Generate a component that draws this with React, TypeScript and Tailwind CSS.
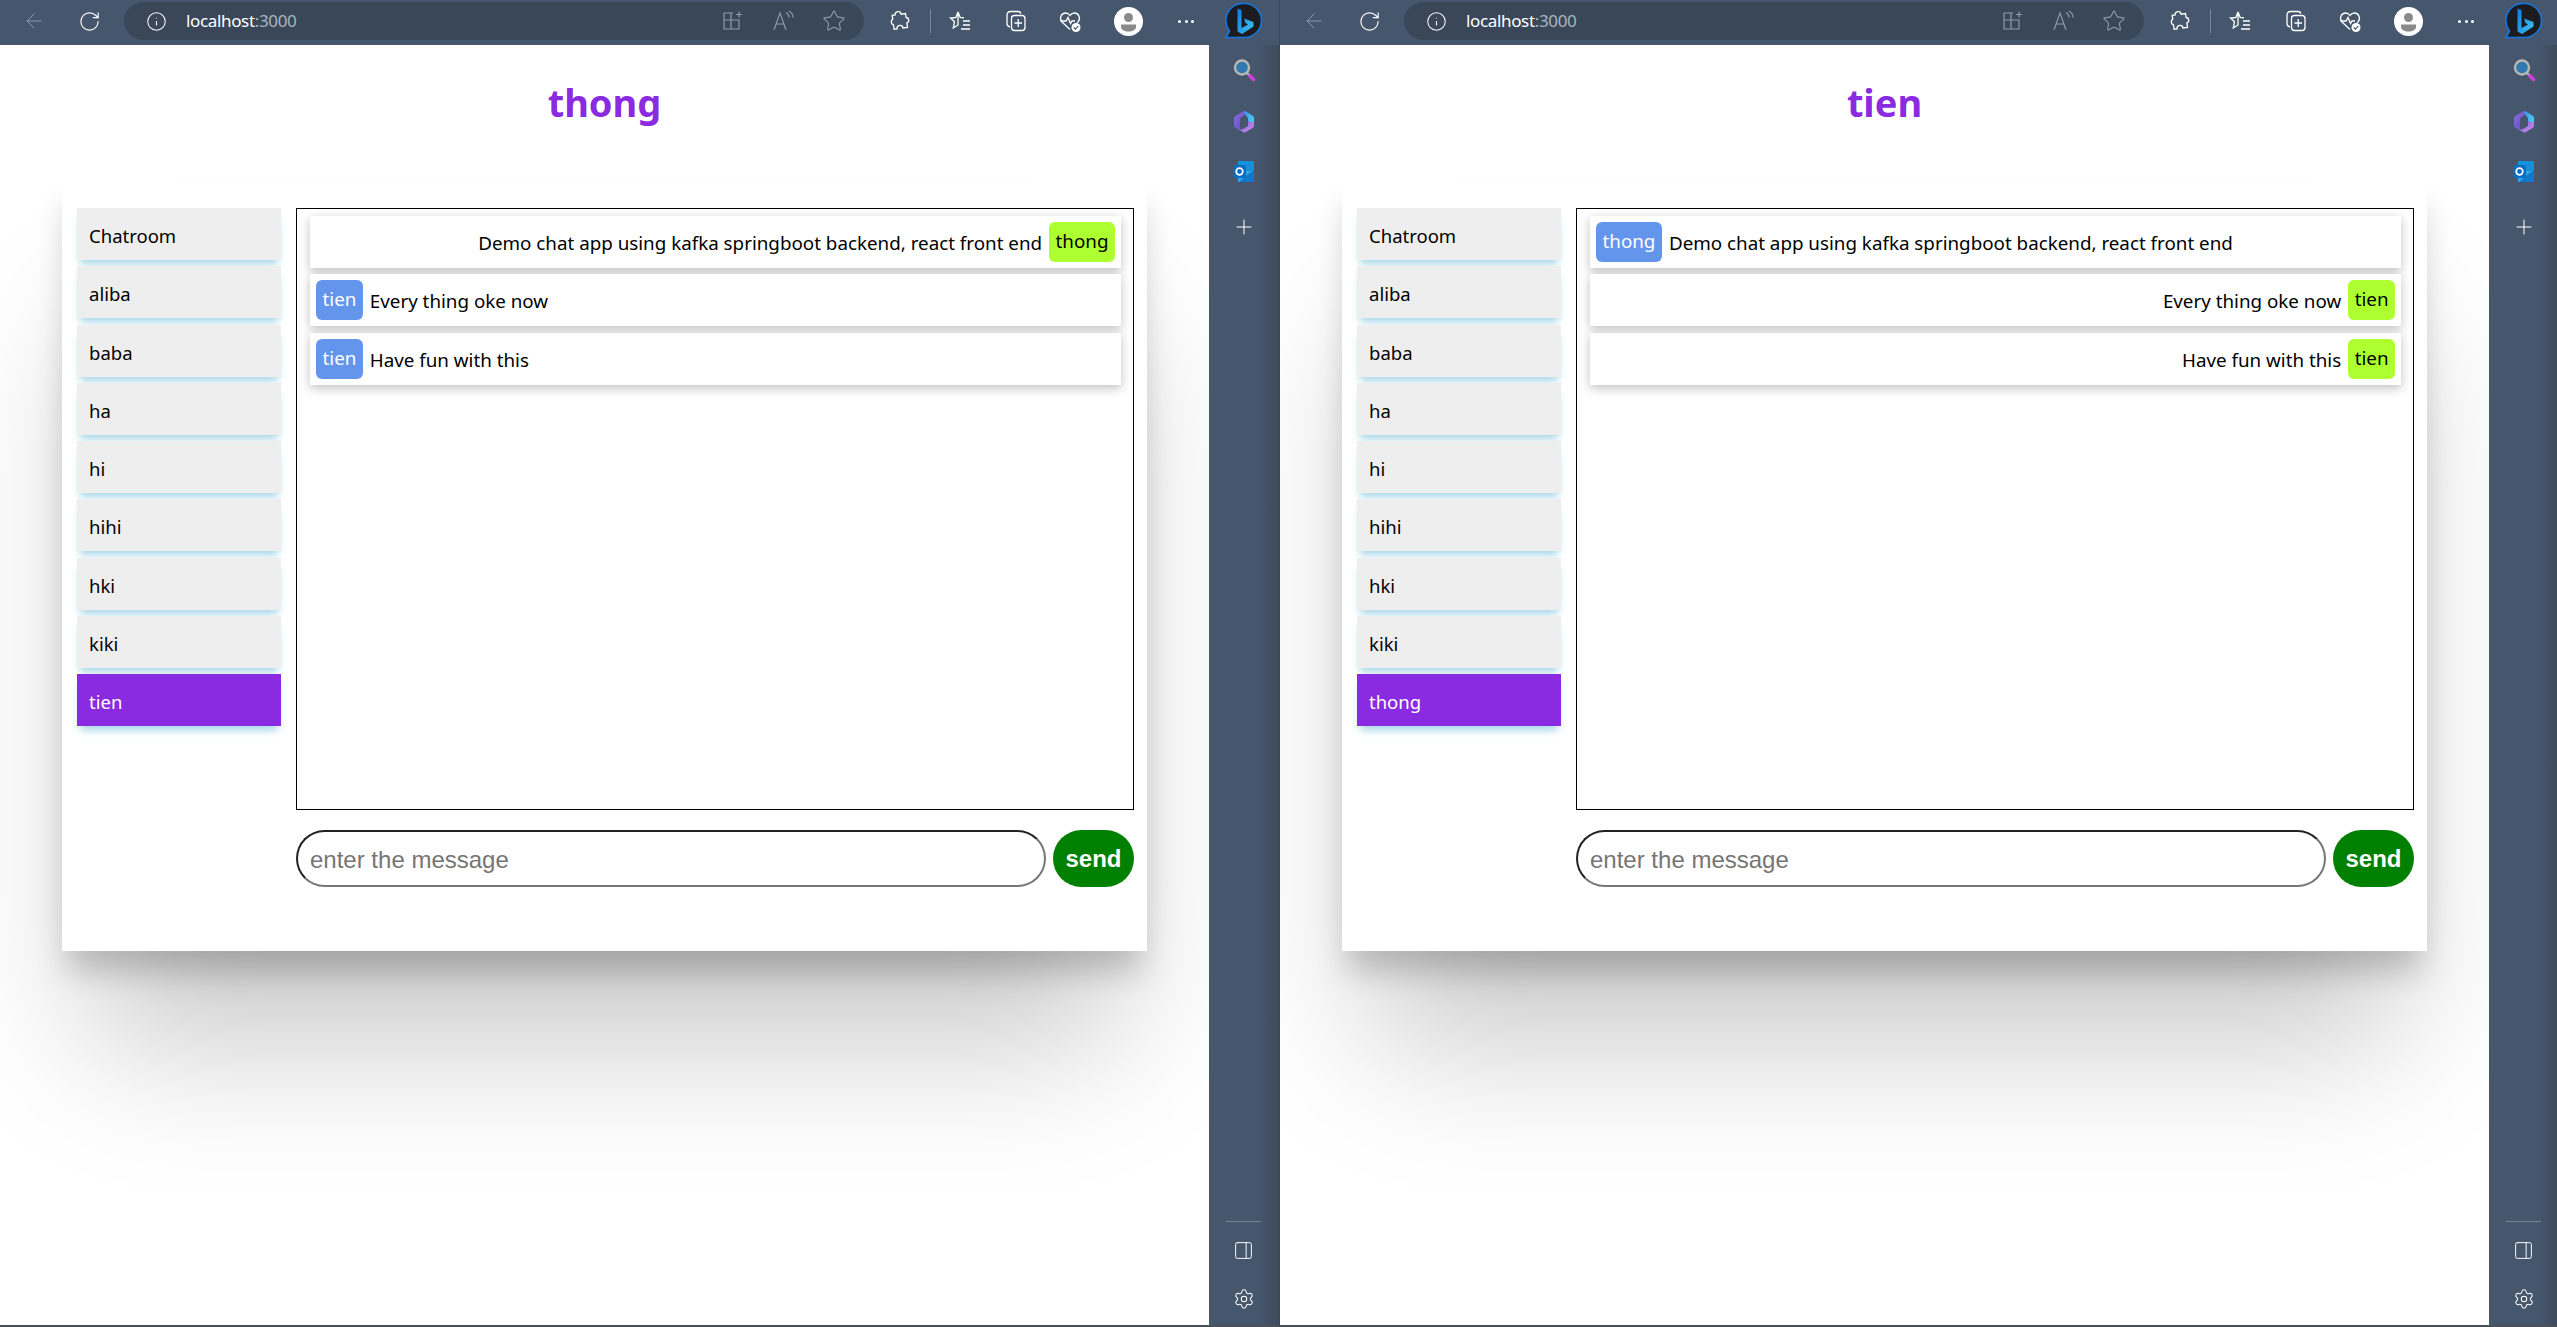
import React from 'react';
import { ArrowLeft, RotateCw, Info, Star, Plus, Settings, PanelRight } from 'lucide-react';

const rooms = {
  thong: ['Chatroom', 'aliba', 'baba', 'ha', 'hi', 'hihi', 'hki', 'kiki', 'tien'],
  tien: ['Chatroom', 'aliba', 'baba', 'ha', 'hi', 'hihi', 'hki', 'kiki', 'thong'],
};

const messages = [
  { from: 'thong', text: 'Demo chat app using kafka springboot backend, react front end' },
  { from: 'tien', text: 'Every thing oke now' },
  { from: 'tien', text: 'Have fun with this' },
];

const BingLogo = () => (
  <svg width="38" height="38" viewBox="0 0 38 38">
    <defs>
      <linearGradient id="bingGrad" x1="0" y1="0" x2="1" y2="1">
        <stop offset="0" stopColor="#1478e6" />
        <stop offset="1" stopColor="#3ec6ea" />
      </linearGradient>
    </defs>
    <path d="M19.500 1.500a17 17 0 0 1 0 34H1l3.500-6.500A17 17 0 0 1 19.500 1.500z" fill="#1c1c1e" stroke="#1477e0" strokeWidth="1.600" />
    <path d="M12.500 6.500L16.500 8v18l6.500-3.500-2.500-1.500-1.500-4.500 9.500 3.500v4.500L17 32l-4.500-2.500z" fill="url(#bingGrad)" />
  </svg>
);

const SplitIcon = () => (
  <svg width="24" height="24" viewBox="0 0 24 24" fill="none" stroke="#8d99aa" strokeWidth="1.200">
    <path d="M13 4H4v16h15v-9H4M11 4v16" />
    <path d="M19 2.500v6M16 5.500h6" />
  </svg>
);

const ReadAloudIcon = () => (
  <svg width="24" height="24" viewBox="0 0 24 24" fill="none" stroke="#8d99aa" strokeWidth="1.200">
    <path d="M3 21L9 4l6 17M5.200 15h7.600" />
    <path d="M15 3.500c2 1 3 2.500 3 5M18 2c2.600 1.400 4 3.600 4 6.500" />
  </svg>
);

const PuzzleIcon = () => (
  <svg width="24" height="24" viewBox="0 0 24 24" fill="none" stroke="#fff" strokeWidth="1.300">
    <path d="M9 5.500a3 3 0 0 1 6 0h4.500v4a2.800 2.800 0 0 1 0 5.500v4.500H15a3 3 0 0 0-6 0H6v-4.500a3 3 0 0 1 0-5.500V5.500z" transform="rotate(-8 12 12)" />
  </svg>
);

const FavoritesIcon = () => (
  <svg width="24" height="24" viewBox="0 0 24 24" fill="none" stroke="#fff" strokeWidth="1.300">
    <path d="M10 3l2.200 5.500 3.800.4M7.800 8.500L2.500 9l4 3.700L5.300 19l4.700-3L10 3z" />
    <path d="M15 12h7M15 16h7M13 20h9" />
  </svg>
);

const CollectionsIcon = () => (
  <svg width="24" height="24" viewBox="0 0 24 24" fill="none" stroke="#fff" strokeWidth="1.300">
    <path d="M6 18c-2-.5-3-1.500-3-3.500V6c0-2 1.500-3.500 3.500-3.500H14c1.500 0 2.500.5 3 2" />
    <rect x="7.500" y="6.500" width="13.500" height="15" rx="3" />
    <path d="M14.200 10v8M10.500 14h7.500" />
  </svg>
);

const HealthIcon = () => (
  <svg width="24" height="24" viewBox="0 0 24 24" fill="none">
    <path d="M12 20.500L4 13C1 9.500 3 4 7.500 4c2 0 3.500 1 4.500 2.500C13 5 14.500 4 16.500 4 21 4 23 9.500 20 13l-1 1" stroke="#fff" strokeWidth="1.300" />
    <path d="M2.500 12H8l2-3.500 2.500 6 1.500-2.500h3" stroke="#fff" strokeWidth="1.300" />
    <circle cx="18" cy="18.500" r="4.500" fill="#fff" />
    <path d="M15.800 18.500l1.600 1.600 2.800-3" stroke="#46566d" strokeWidth="1.300" />
  </svg>
);

const Avatar = () => (
  <svg width="29" height="29" viewBox="0 0 29 29">
    <circle cx="14.500" cy="14.500" r="14.500" fill="#fff" />
    <circle cx="14.500" cy="10.500" r="4.500" fill="#8a8a8a" />
    <path d="M7 17.500h15v2.500c0 2.500-3 4.500-7.500 4.500S7 22.500 7 20z" fill="#8a8a8a" />
  </svg>
);

const SearchApp = () => (
  <svg width="24" height="24" viewBox="0 0 24 24">
    <circle cx="10" cy="9.500" r="7" fill="#2f79ad" stroke="#b6b6b6" strokeWidth="2.400" />
    <path d="M15 15l3 3" stroke="#b6b6b6" strokeWidth="2.400" />
    <path d="M18 18l3.500 3.500" stroke="#d53fe0" strokeWidth="3.600" strokeLinecap="round" />
  </svg>
);

const CopilotApp = () => (
  <svg width="24" height="24" viewBox="0 0 24 24">
    <defs>
      <linearGradient id="copA" x1="0" y1="0" x2="1" y2="1">
        <stop offset="0" stopColor="#8a6fe6" />
        <stop offset="1" stopColor="#5b45bf" />
      </linearGradient>
      <linearGradient id="copB" x1="0" y1="0" x2="1" y2="1">
        <stop offset="0" stopColor="#3a8fe6" />
        <stop offset="1" stopColor="#55d2ea" />
      </linearGradient>
      <linearGradient id="copC" x1="0" y1="0" x2="1" y2="1">
        <stop offset="0" stopColor="#8a55d2" />
        <stop offset="1" stopColor="#c795ee" />
      </linearGradient>
    </defs>
    <path d="M11 1.500L3.500 6c-1 .6-1.500 1.500-1.500 2.500v7c0 1 .5 2 1.500 2.500L8 20.500V9.500c0-1 .5-1.800 1.500-2.300L14 4z" fill="url(#copA)" />
    <path d="M11 1.500c1-.5 2-.5 3 0l6.500 4c1 .6 1.500 1.500 1.500 2.500v6.500l-6-3.500V8.500c0-1-.5-1.500-1.300-2z" fill="url(#copB)" />
    <path d="M22 13v2.500c0 1-.5 2-1.500 2.500L14 22c-1 .6-2 .6-3 0l-5-3c2 .8 4 .6 5.500-.3L16 16v-5z" fill="url(#copC)" />
  </svg>
);

const OutlookApp = () => (
  <svg width="24" height="24" viewBox="0 0 24 24">
    <rect x="6" y="1" width="16" height="11" fill="#1490df" />
    <rect x="6" y="11" width="16" height="11" fill="#28a8ea" />
    <path d="M22 10v11a1 1 0 0 1-1 1H7l8-7z" fill="#0f78c8" />
    <rect x="1" y="5" width="13" height="13" rx="1.500" fill="#0a6cc0" />
    <circle cx="7.500" cy="11.500" r="3.300" fill="none" stroke="#fff" strokeWidth="1.700" />
  </svg>
);

const BrowserBar = ({ backColor }: { backColor: string }) => (
  <div className="flex h-[45px] shrink-0 items-center bg-[#46566d] pb-[3px]">
    <ArrowLeft size={24} strokeWidth={1} color={backColor} className="ml-[22px]" />
    <RotateCw size={23} strokeWidth={1.2} color="#fff" className="ml-[32px]" />
    <div className="ml-[23px] flex h-[38px] w-[740px] items-center rounded-full bg-[#394759] pr-[18px]">
      <Info size={21} strokeWidth={1.2} color="#fff" className="ml-[22px]" />
      <span className="ml-[19px] text-[17px] tracking-[-0.35px] text-white">
        localhost<span className="text-[#aeb4bd]">:3000</span>
      </span>
      <div className="ml-auto flex items-center gap-[27px]">
        <SplitIcon />
        <ReadAloudIcon />
        <Star size={24} strokeWidth={1.1} color="#8d99aa" />
      </div>
    </div>
    <div className="ml-[23px] flex"><PuzzleIcon /></div>
    <div className="ml-[19px] h-[24px] w-px bg-[#7b8798]" />
    <div className="ml-[17px] flex"><FavoritesIcon /></div>
    <div className="ml-[32px] flex"><CollectionsIcon /></div>
    <div className="ml-[30px] flex"><HealthIcon /></div>
    <div className="ml-[32px] flex"><Avatar /></div>
    <div className="ml-[35px] flex w-[16px] justify-between">
      <span className="size-[3px] rounded-full bg-white" />
      <span className="size-[3px] rounded-full bg-white" />
      <span className="size-[3px] rounded-full bg-white" />
    </div>
    <div className="ml-[31px] flex"><BingLogo /></div>
  </div>
);

const AppRail = () => (
  <div className="flex w-[70px] shrink-0 flex-col items-center bg-gradient-to-r from-[#46566d] from-70% to-[#3d4a5b] pb-[15px] pt-[13px] pr-px">
    <SearchApp />
    <div className="mt-[28px] flex"><CopilotApp /></div>
    <div className="mt-[26px] flex"><OutlookApp /></div>
    <Plus size={24} strokeWidth={1} color="#fff" className="mt-[31px]" />
    <div className="mt-auto h-px w-[35px] bg-[#76828f]" />
    <PanelRight size={21} strokeWidth={1.1} color="#fff" className="mt-[18px]" />
    <Settings size={22} strokeWidth={1.1} color="#fff" className="mt-[27px]" />
  </div>
);

const ChatWindow = ({ user }: { user: 'thong' | 'tien' }) => (
  <div className="flex h-full w-[1280px] shrink-0 flex-col overflow-hidden border-r border-[#3a4656]">
    <BrowserBar backColor="#8d99aa" />
    <div className="flex min-h-0 flex-1">
      <main className="min-w-0 flex-1 overflow-hidden bg-white">
        <h1 className="mt-[31px] h-[102px] text-center text-[38px] leading-[52px] font-bold text-[#8a2be2]">{user}</h1>
        <div className="mx-[62px] flex h-[773px] gap-[15px] bg-white pl-[15px] pr-[13px] pt-[30px] shadow-[0_120px_140px_-30px_rgba(0,0,0,0.22),0_25px_30px_-5px_rgba(0,0,0,0.2)]">
          <ul className="flex w-[204px] shrink-0 flex-col gap-[6.25px]">
            {rooms[user].map((room, i) => (
              <li
                key={room}
                className={`h-[52px] pl-[12px] pt-[12px] text-[18.5px] leading-[32px] shadow-[0_7px_8px_-3px_#a5d6e8] ${
                  i === 8 ? 'bg-[#8a2be2] text-white' : 'bg-[#eeeeee] text-black'
                }`}
              >
                {room}
              </li>
            ))}
          </ul>
          <div className="flex flex-1 flex-col">
            <div className="flex h-[602px] flex-col gap-[6.25px] border border-black pl-[13px] pr-[12px] pt-[7px]">
              {messages.map((m, i) => {
                const mine = m.from === user;
                return (
                  <div
                    key={i}
                    className={`flex h-[52px] shrink-0 items-start gap-[7px] bg-white p-[6px] text-[18.8px] shadow-[0_3px_10px_rgba(0,0,0,0.25)] ${
                      mine ? 'flex-row-reverse' : ''
                    }`}
                  >
                    <span
                      className={`h-[40px] rounded-[6px] px-[6.5px] leading-[38px] ${
                        mine ? 'bg-[#adff2f] text-black' : 'bg-[#6495ed] text-white'
                      }`}
                    >
                      {m.from}
                    </span>
                    <span className="leading-[42px] text-black">{m.text}</span>
                  </div>
                );
              })}
            </div>
            <div className="mt-[20px] flex h-[57px] gap-[7px]">
              <input
                placeholder="enter the message"
                className="min-w-0 flex-1 rounded-full border-2 border-t-[#222] border-r-[#767676] border-b-[#767676] border-l-[#222] bg-white px-[12px] pt-[2px] font-['Liberation_Sans',sans-serif] text-[24px] outline-none placeholder:text-[#757575]"
              />
              <button className="w-[81px] rounded-full bg-[#008000] pt-[1px] font-['Liberation_Sans',sans-serif] text-[24px] font-bold text-white">
                send
              </button>
            </div>
          </div>
        </div>
      </main>
      <AppRail />
    </div>
    <div className="h-[2px] shrink-0 bg-[#4b5057]" />
  </div>
);

export default function App() {
  return (
    <div className="flex h-[1327px] w-[2557px] overflow-hidden font-['Noto_Sans',sans-serif]">
      <ChatWindow user="thong" />
      <ChatWindow user="tien" />
    </div>
  );
}
